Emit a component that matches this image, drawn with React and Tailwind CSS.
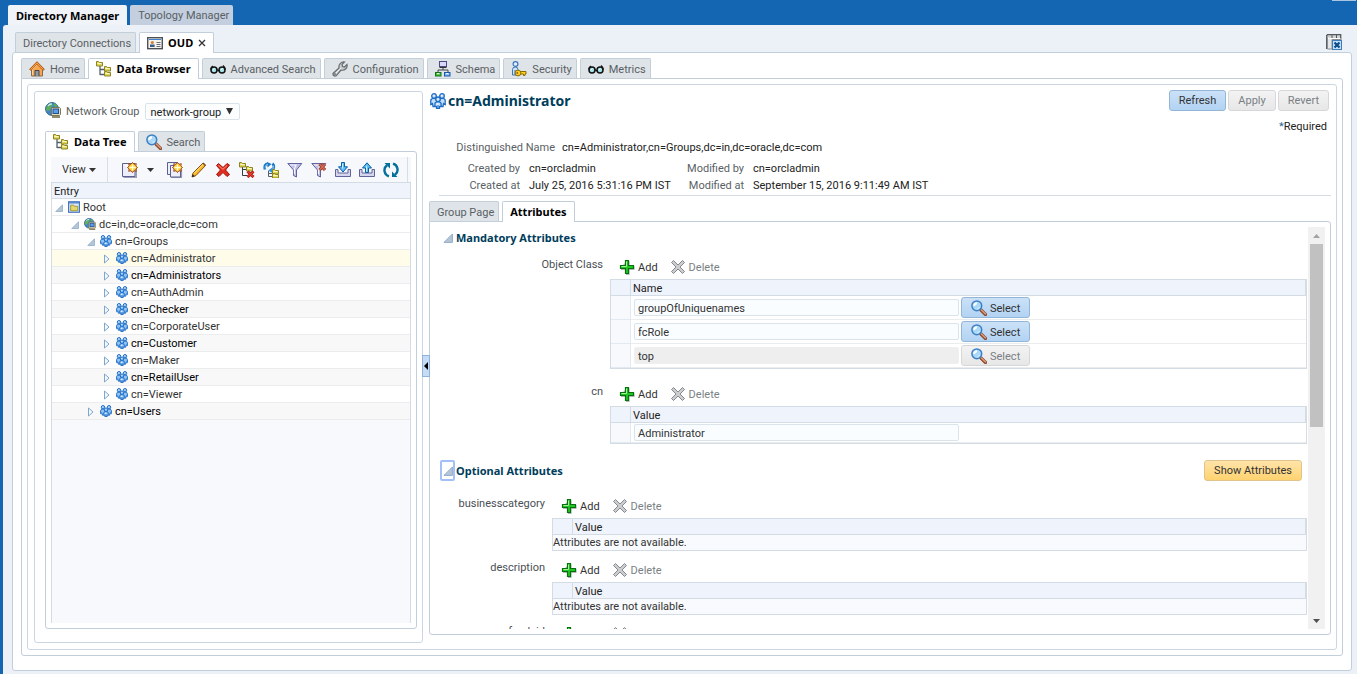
import React, { useState } from 'react';

/* ---------- Icons ---------- */

function Icon({ size = 16, children }) {
  return (
    <svg
      width={size}
      height={size}
      viewBox="0 0 16 16"
      fill="none"
      aria-hidden="true"
      className="shrink-0"
    >
      {children}
    </svg>
  );
}

function HomeIcon() {
  return (
    <Icon>
      <path d="M2.500 8v7h11V8L8 2.500z" fill="#f7a54e" stroke="#8a6a48" />
      <path d="M3.500 14V8.500L8 4" stroke="#ffd29a" />
      <path d="M6 15V9.500h4V15" fill="#8d99a8" stroke="#3f4854" />
      <path d="M1 9l7-7 7 7" stroke="#a04d12" strokeWidth="2.400" />
      <path d="M1.500 8.700L8 2.200l6.500 6.500" stroke="#ffa544" strokeWidth="1.200" />
    </Icon>
  );
}

function Folder({ x, y }) {
  return (
    <g transform={`translate(${x} ${y})`}>
      <path d="M.5.5h2l1 1h3v3.500h-6z" fill="#e2d75c" stroke="#8b8422" />
      <path d="M1.500 2.500h4" stroke="#fbf8c4" />
    </g>
  );
}

function TreeIcon() {
  return (
    <Icon>
      <path d="M4 5v9M4 8.500h5M4 13.500h5" stroke="#55606b" strokeWidth="1.300" />
      <Folder x={0} y={0} />
      <Folder x={8} y={5} />
      <Folder x={8} y={10} />
    </Icon>
  );
}

function TreeDeleteIcon() {
  return (
    <Icon>
      <path d="M3.500 5v8.500H8M3.500 7.500H8" stroke="#333b44" />
      <Folder x={0} y={0} />
      <Folder x={7} y={4} />
      <path d="M8.500 9.500l6 5.500M14.500 9.500l-6 5.500" stroke="#8f1410" strokeWidth="2.800" />
      <path d="M8.500 9.500l6 5.500M14.500 9.500l-6 5.500" stroke="#ee3a2b" strokeWidth="1.400" />
    </Icon>
  );
}

function TreeRefreshIcon() {
  return (
    <Icon>
      <path d="M5.500 9v5.500H9M5.500 11.500H9" stroke="#55606b" />
      <path d="M2 7.500C1 4 2.500 1.500 5 1.700" stroke="#1c78c4" strokeWidth="2.600" />
      <path d="M4 0l4.500 2L4.500 5.500z" fill="#1c78c4" />
      <path d="M9.500 1.500C12 4 11 7.500 8.500 8.500" stroke="#1c78c4" strokeWidth="2.600" />
      <path d="M9.500 5.500v5.500L5 8.500z" fill="#2f95dc" />
      <path d="M2.300 6.500C2 4 3 2.300 5 2.200M10.300 3.500q1 2-.8 4" stroke="#9ad8fa" strokeWidth=".8" />
      <Folder x={9} y={7} />
      <Folder x={9} y={11} />
    </Icon>
  );
}

function GlassesIcon() {
  return (
    <Icon>
      <circle cx="4" cy="9" r="3" fill="#a5e3e6" stroke="#111" strokeWidth="1.500" />
      <circle cx="12" cy="9" r="3" fill="#a5e3e6" stroke="#111" strokeWidth="1.500" />
      <path d="M6.500 8.500l3 1.500M1 8.500Q.5 6.500 3 5M15 8.500q.5-2-2-4" stroke="#111" strokeWidth="1.300" />
      <path d="M3 9l1.500-1.500M11 9l1.500-1.500" stroke="#fff" />
    </Icon>
  );
}

function WrenchIcon() {
  return (
    <Icon>
      <path
        d="M1.200 12.200L7 7C6.200 3.500 9 .6 12.500 1L10 3.500l.5 2 2 .5L15 3.500c.8 3.700-2.500 6.500-6 5.500L4.200 14.800c-1.700 1-3.900-.8-3-2.600z"
        fill="#c9cbcd"
        stroke="#6a6d70"
        strokeWidth="1.200"
      />
      <path d="M3 13l6-6" stroke="#f2f3f4" />
      <circle cx="3" cy="13" r=".9" fill="#6a6d70" />
    </Icon>
  );
}

function SchemaIcon() {
  return (
    <Icon>
      <path d="M8 6v3M3 11.500V9h10v2.500" stroke="#444" />
      <rect x="4.500" y=".5" width="7" height="5" fill="#d9d6f7" stroke="#4b4a83" />
      <path d="M4.500 6.500h7" stroke="#333" />
      <rect x=".5" y="11.500" width="5.500" height="3.500" fill="#3fbf3c" stroke="#14701a" />
      <rect x="9.500" y="11.500" width="5.500" height="3.500" fill="#7db9f2" stroke="#1d56a5" />
      <path d="M2 12.700h2.500M11 12.700h2.500" stroke="#fff" />
    </Icon>
  );
}

function SecurityIcon() {
  return (
    <Icon>
      <path d="M1.500 14V8.500Q1.500 6 4.200 6T7 8.500L6.500 14z" fill="#cfe2f8" stroke="#3c74bd" />
      <path d="M4 9v5" stroke="#3c74bd" />
      <circle cx="4.500" cy="3" r="2.400" fill="#e3effc" stroke="#3c74bd" strokeWidth="1.200" />
      <path d="M9 10.500h6v2.500h-1v1.500h-1.500V13H9" fill="#ffd21f" stroke="#8c6a08" />
      <circle cx="7" cy="12" r="2.900" fill="#ffd21f" stroke="#8c6a08" />
      <circle cx="6.300" cy="12" r="1" fill="#8c6a08" />
    </Icon>
  );
}

function CardIcon() {
  return (
    <Icon>
      <rect x=".7" y="2.700" width="14.600" height="11" fill="#f4f4ec" stroke="#4c5158" strokeWidth="1.400" />
      <path d="M2 4.500h12" stroke="#3f7fd0" />
      <circle cx="5.300" cy="7.500" r="1.600" fill="#d4823a" />
      <path d="M3 12V9.500h4.600V12z" fill="#3a5a8c" />
      <path d="M9.500 7.500h4M9.500 9.500h4M9.500 11.500h4" stroke="#6a7078" />
    </Icon>
  );
}

function CloseTabsIcon() {
  return (
    <Icon>
      <path d="M.7 15V1.500l1-1h13V6" fill="#d0d2d4" stroke="#55585c" strokeWidth="1.300" />
      <path d="M1.500 3.500V15H6V5.500h9" fill="#e3e5e6" stroke="#8b8f94" />
      <path d="M6 1v3M10.500 1v3" stroke="#55585c" />
      <path d="M2 4.500h12.500" stroke="#fff" />
      <rect x="6.500" y="6.500" width="9" height="9" fill="#c5e0f6" stroke="#3c7cb8" />
      <path d="M8.500 8.500l5 5M13.500 8.500l-5 5" stroke="#0b4a86" strokeWidth="2.200" />
    </Icon>
  );
}

function GlobeIcon({ size }) {
  return (
    <Icon size={size}>
      <circle cx="7" cy="7" r="6.400" fill="#3f86c7" stroke="#2a5f92" />
      <path d="M1.500 5q2-4 5-4l1.500 2L6 5 5 8 2.500 9 1 8zM9 1l3.500 2.500L11 5 9 4z" fill="#5fae5b" />
      <path d="M3 4Q4.500 1.800 7 1.800" stroke="#d2ecff" strokeWidth="1.300" />
      <path d="M6.500 5.500h8l1 1v6l-1 1h-8z" fill="#e4ddb8" stroke="#7d7754" />
      <rect x="8" y="7" width="5.500" height="4.500" fill="#5c9dec" stroke="#1f4f94" />
      <path d="M7 15h8" stroke="#7d7754" strokeWidth="1.700" />
    </Icon>
  );
}

function SearchIcon() {
  return (
    <Icon>
      <path d="M10 10l4.500 4.500" stroke="#8a4a30" strokeWidth="3.200" strokeLinecap="round" />
      <path d="M10.500 10l4 4" stroke="#dd9c7c" strokeWidth="1.500" strokeLinecap="round" />
      <circle cx="5.800" cy="5.800" r="4.900" fill="#a9d8f8" stroke="#3f80c4" strokeWidth="1.500" />
      <path d="M3.200 6Q3.200 3.200 6 3.200" stroke="#fff" strokeWidth="2" />
      <path d="M8.500 7Q8 8.500 6.500 8.800" stroke="#e2f4ff" />
    </Icon>
  );
}

function Spark() {
  return (
    <g>
      <path
        d="M10.500.5l1.500 1.800 2.300-.6-.5 2.300 1.700 1.500-1.700 1.500.5 2.300-2.300-.6-1.500 1.800L9 8.700l-2.300.6.5-2.300L5.500 5.500 7.200 4l-.5-2.300 2.300.6z"
        fill="#ffcf2e"
        stroke="#96381a"
        strokeWidth=".9"
      />
      <path d="M10.500 2.500v6M7.500 5.500h6" stroke="#fffce0" strokeWidth="1.300" />
    </g>
  );
}

function NewIcon() {
  return (
    <Icon>
      <path d="M1.500 15.300h12.800V6" stroke="#9a9cba" strokeWidth="1.400" />
      <path d="M.5 1.500h12.500v13H.5z" fill="#eceffa" stroke="#5c5f8f" />
      <path d="M1.500 2.500h6v5z" fill="#fff" />
      <Spark />
    </Icon>
  );
}

function NewCopyIcon() {
  return (
    <Icon>
      <path d="M.5.5h10v12H.5z" fill="#eceffa" stroke="#5c5f8f" />
      <path d="M4 15.500h10.500V7" stroke="#9a9cba" strokeWidth="1.200" />
      <path d="M3.500 3.500h10v11.500h-10z" fill="#eceffa" stroke="#5c5f8f" />
      <Spark />
    </Icon>
  );
}

function PencilIcon() {
  return (
    <Icon>
      <path d="M1 15l1-4L12 1l2.500 2.500L5 13.500z" fill="#f7b52a" stroke="#8a5310" />
      <path d="M3 11.500L12.500 2" stroke="#ffe494" />
      <path d="M1 15l.6-2.800 2.200 2.100z" fill="#222" />
      <path d="M12 1l2.500 2.500" stroke="#7a4a1c" strokeWidth="1.500" />
    </Icon>
  );
}

function RedXIcon() {
  return (
    <Icon>
      <path
        d="M1.500 3.500l2-2L8 5.500l4-4 2.500 1.500L10.500 8l4 4.500-2.500 2L8 10.500l-4 4-2.500-2L5.500 8z"
        fill="#e22c1c"
        stroke="#9c150b"
      />
      <path d="M3.500 3.500L8 7.300l4-3.800" stroke="#ff9382" />
    </Icon>
  );
}

function FunnelShape() {
  return (
    <g>
      <path d="M.8 1.500h14L9.500 8v7l-3-1.500V8z" fill="#bfc0e4" stroke="#62639c" />
      <path d="M3 3h6L7.500 6.500V12" stroke="#f6f6ff" strokeWidth="1.200" />
    </g>
  );
}

function FunnelIcon() {
  return (
    <Icon>
      <FunnelShape />
    </Icon>
  );
}

function FunnelClearIcon() {
  return (
    <Icon>
      <FunnelShape />
      <path d="M8.500 2l5.500 6M14 2L8.500 8" stroke="#8f3a2c" strokeWidth="3.200" />
      <path d="M8.500 2l5.500 6M14 2L8.500 8" stroke="#d96a55" strokeWidth="1.500" />
    </Icon>
  );
}

function TrayShape() {
  return <path d="M3 7.500H.5v7h15v-7H13V11H3z" fill="#d5d6ee" stroke="#61639b" />;
}

function ImportIcon() {
  return (
    <Icon>
      <TrayShape />
      <path d="M6.500.5h3v4.300h3L8 10 3.500 4.800h3z" fill="#5fc0f8" stroke="#0b5da3" />
      <path d="M7.500 1.500v5" stroke="#c9edff" />
    </Icon>
  );
}

function ExportIcon() {
  return (
    <Icon>
      <TrayShape />
      <path d="M6.500 10.500h3V6h3L8 .8 3.500 6h3z" fill="#5fc0f8" stroke="#0b5da3" />
      <path d="M7.500 4v5.500" stroke="#c9edff" />
    </Icon>
  );
}

function RefreshIcon() {
  return (
    <Icon>
      <path d="M6 14.300A6.300 6.300 0 0 1 4 3.200" stroke="#06709c" strokeWidth="2.400" />
      <path d="M10 1.700A6.300 6.300 0 0 1 12 12.800" stroke="#06709c" strokeWidth="2.400" />
      <path d="M1.500 1h5.500v5.500zM14.500 15H9V9.500z" fill="#06709c" />
    </Icon>
  );
}

function RootIcon() {
  return (
    <Icon size={12}>
      <rect x=".8" y="1" width="14.400" height="14" fill="#dbe9fb" stroke="#3b6fc0" strokeWidth="1.500" />
      <path d="M1.500 2.500h13" stroke="#3b6fc0" strokeWidth="1.500" />
      <path d="M3.500 5.500h4l1 1.500h4.500v6H3.500z" fill="#e5d76a" stroke="#8b8422" />
    </Icon>
  );
}

function GroupIcon({ size, fill = '#c3dffa' }) {
  return (
    <Icon size={size}>
      <g fill={fill} stroke="#1e6cc4" strokeWidth="1.300">
        <circle cx="4" cy="3" r="2.300" />
        <circle cx="12" cy="3" r="2.300" />
        <path d="M.8 11.500V7.500Q.8 5.400 4 5.400T7 7.500l-1 6H3l-.5-3z" />
        <path d="M15.200 11.500V7.500q0-2.100-3.200-2.100T9 7.500l1 6h3l.5-3z" />
        <circle cx="8" cy="6.300" r="2.300" />
        <path d="M4.900 13v-2.200q0-2 3.100-2t3.100 2V13l-1.600.5v2h-3v-2z" />
      </g>
      <path d="M3.300 2.500h1M11.300 2.500h1M7.400 5.800h1M6.500 11h2" stroke="#fff" strokeWidth="1.200" />
      <path d="M8 12v3.500" stroke="#1e6cc4" />
    </Icon>
  );
}

function PlusIcon() {
  return (
    <Icon>
      <path d="M7.500 2.500h3v5h5v3.500h-5v5H7v-5H2V8" fill="#aeb8b0" />
      <path d="M6.500 1.500h3v5h5v3h-5v5h-3v-5h-5v-3h5z" fill="#1fc81f" stroke="#0a6f12" strokeWidth="1.200" />
      <path d="M7.500 2.500v5h-5" stroke="#a4f59c" />
    </Icon>
  );
}

function GrayXIcon() {
  return (
    <Icon>
      <path
        d="M1.500 3.500l2-2L8 6l4.500-4.500 2 2L10 8l4.500 4.500-2 2L8 10l-4.500 4.500-2-2L6 8z"
        fill="#cbcdcf"
        stroke="#85888c"
      />
    </Icon>
  );
}

function Disclosure({ open, size = 8 }) {
  return open ? (
    <svg width={size} height={size} viewBox="0 0 8 8" aria-hidden="true" className="shrink-0">
      <path d="M7.500.8v6.700H.8z" fill="#b4c6d8" stroke="#8fabc6" strokeWidth=".8" />
    </svg>
  ) : (
    <svg width="8" height="10" viewBox="0 0 8 10" fill="none" aria-hidden="true" className="shrink-0">
      <path d="M1.500 1v8l4.500-4z" fill="#f4f9fe" stroke="#7fa6cd" />
    </svg>
  );
}

function Caret() {
  return (
    <svg width="7" height="4" viewBox="0 0 7 4" aria-hidden="true" className="shrink-0">
      <path d="M0 0h7L3.500 4z" fill="#333" />
    </svg>
  );
}

/* ---------- Shared pieces ---------- */

const bold = "font-['Noto_Sans',sans-serif] font-bold";

function Tab({ icon, label, active, onClick, children }) {
  return (
    <button
      type="button"
      role="tab"
      aria-selected={active}
      onClick={onClick}
      className={
        'flex items-center gap-[5px] rounded-t-[2px] border border-b-0 border-[#c3cedb] pl-[7px] whitespace-nowrap ' +
        (active ? `relative h-[21px] -mb-px pr-[7px] bg-white text-black ${bold}` : 'h-5 pr-1 bg-[#dfe4e8] text-[#5a5f65]')
      }
    >
      {icon}
      <span className={active ? '' : 'pt-[2px]'}>{label}</span>
      {children}
    </button>
  );
}

function ActionButton({ tone = 'blue', disabled, icon, children }) {
  const tones = {
    blue: 'border-[#92b5d8] bg-linear-to-b from-[#cbe1f7] to-[#b2d3f3] text-[#333]',
    gray: 'border-[#d5d7d9] bg-linear-to-b from-[#f3f3f3] to-[#e7e7e7] text-[#7a7f85]',
    gold: 'border-[#dfc48b] bg-linear-to-b from-[#ffe4a9] to-[#ffd26e] text-[#333]',
  };
  return (
    <button
      type="button"
      disabled={disabled}
      className={`flex items-center gap-[3px] h-[21px] px-[9px] rounded-[3px] border whitespace-nowrap ${tones[tone]}`}
    >
      {icon}
      <span className={icon ? 'pt-[2px]' : ''}>{children}</span>
    </button>
  );
}

/* ---------- Left side: data tree ---------- */

const treeRows = [
  { level: 0, label: 'Root', kind: 'root', open: true },
  { level: 1, label: 'dc=in,dc=oracle,dc=com', kind: 'domain', open: true },
  { level: 2, label: 'cn=Groups', kind: 'group', open: true },
  { level: 3, label: 'cn=Administrator', kind: 'group', selected: true },
  { level: 3, label: 'cn=Administrators', kind: 'group', band: true },
  { level: 3, label: 'cn=AuthAdmin', kind: 'group' },
  { level: 3, label: 'cn=Checker', kind: 'group', band: true },
  { level: 3, label: 'cn=CorporateUser', kind: 'group' },
  { level: 3, label: 'cn=Customer', kind: 'group', band: true },
  { level: 3, label: 'cn=Maker', kind: 'group' },
  { level: 3, label: 'cn=RetailUser', kind: 'group', band: true },
  { level: 3, label: 'cn=Viewer', kind: 'group' },
  { level: 2, label: 'cn=Users', kind: 'group', band: true },
];

const indents = ['pl-[3px]', 'pl-[19px]', 'pl-[35px]', 'pl-[51px]'];

const rowIcons = {
  root: <RootIcon />,
  domain: <GlobeIcon size={12} />,
  group: <GroupIcon size={12} fill="#8fc3f5" />,
};

function TreeRow({ row }) {
  const tone = row.selected
    ? 'bg-[#fffdea] text-[#333]'
    : row.band
      ? 'bg-[#f8f8f8] text-black'
      : 'bg-white text-[#333]';
  return (
    <li
      role="treeitem"
      aria-expanded={!!row.open}
      aria-selected={!!row.selected}
      className={`flex items-center h-[17px] border-b border-[#ebecee] ${indents[row.level]} ${tone}`}
    >
      <span className="w-[13px] flex items-center pt-[2px]">
        <Disclosure open={row.open} />
      </span>
      {rowIcons[row.kind]}
      <span className="ml-[3px] pt-[2px]">{row.label}</span>
    </li>
  );
}

const toolbarActions = [
  ['Create like', <NewCopyIcon />],
  ['Edit', <PencilIcon />],
  ['Delete', <RedXIcon />],
  ['Delete subtree', <TreeDeleteIcon />],
  ['Refresh subtree', <TreeRefreshIcon />],
  ['Filter', <FunnelIcon />],
  ['Clear filter', <FunnelClearIcon />],
  ['Import', <ImportIcon />],
  ['Export', <ExportIcon />],
  ['Refresh', <RefreshIcon />],
];

function TreeToolbar() {
  return (
    <div className="flex items-center h-[25px] bg-[#f6f8fc]">
      <button type="button" className="flex items-center gap-[3px] w-14 h-full pl-[11px] text-[#333]">
        View <Caret />
      </button>
      <span className="w-px h-full bg-[#d6dfe6]" />
      <button type="button" aria-label="New entry" className="ml-[14px]">
        <NewIcon />
      </button>
      <button type="button" aria-label="New entry options" className="mx-[9px]">
        <Caret />
      </button>
      {toolbarActions.map(([label, icon]) => (
        <button key={label} type="button" aria-label={label} className="w-6 flex justify-center">
          {icon}
        </button>
      ))}
      <span className="ml-1 w-px h-full bg-[#d6dfe6]" />
    </div>
  );
}

function BrowserPane() {
  const [group, setGroup] = useState('network-group');

  return (
    <aside className="w-[389px] shrink-0 flex flex-col rounded-[3px] border border-[#ccd6e2] pl-[10px] pr-[5px] pt-[10px] pb-[13px]">
      <div className="flex items-start h-[18px]">
        <GlobeIcon size={16} />
        <label htmlFor="network-group" className="ml-[5px] pt-[2px] text-[#5a5f65]">
          Network Group
        </label>
        <div className="relative ml-[6px] pt-px">
          <select
            id="network-group"
            value={group}
            onChange={(e) => setGroup(e.target.value)}
            className="block appearance-none w-[95px] h-[17px] pl-1 pt-px rounded-[2px] border border-[#dbe3ea] bg-[#fbfdff] text-[#222]"
          >
            <option>network-group</option>
          </select>
          <svg
            width="7"
            height="7"
            viewBox="0 0 7 7"
            aria-hidden="true"
            className="absolute right-[7px] top-[6px] pointer-events-none"
          >
            <path d="M0 0h7L3.500 6.500z" fill="#333" />
          </svg>
        </div>
      </div>

      <div role="tablist" className="flex gap-[3px] mt-[11px]">
        <Tab active icon={<TreeIcon />} label="Data Tree" />
        <Tab icon={<SearchIcon />} label="Search" />
      </div>
      <div className="flex-1 min-h-0 flex flex-col rounded-b-[3px] rounded-tr-[3px] border border-[#c3cedb] p-[5px]">
        <TreeToolbar />
        <div className="flex-1 min-h-0 flex flex-col border-x border-[#d3dce5] bg-[#f7f9fd]">
          <div className="h-[17px] border-y border-[#d3dce5] bg-[#eff3fb] pl-[2px] pt-px leading-[15px] text-[#222]">
            Entry
          </div>
          <ul role="tree">
            {treeRows.map((row) => (
              <TreeRow key={row.label} row={row} />
            ))}
          </ul>
        </div>
      </div>
    </aside>
  );
}

/* ---------- Right side: entry details ---------- */

function AttributeBlock({ label, wide, children }) {
  return (
    <div className="flex gap-[7px] pr-px">
      <div className={`shrink-0 pt-px text-right text-[#4a4f55] ${wide ? 'w-[168px]' : 'w-[110px]'}`}>{label}</div>
      <div className="flex-1 min-w-0 pt-[3px]">
        <div className="flex items-center gap-3 h-4 mb-1 pl-[9px]">
          <button type="button" className="flex items-center gap-[3px] text-[#333]">
            <PlusIcon />
            <span className="pt-[2px]">Add</span>
          </button>
          <button type="button" disabled className="flex items-center gap-[3px] text-[#7a7f85]">
            <GrayXIcon />
            <span className="pt-[2px]">Delete</span>
          </button>
        </div>
        {children}
      </div>
    </div>
  );
}

function ValueTable({ heading, children }) {
  return (
    <table className="w-full border-separate border-spacing-0 border border-[#d3dce5]">
      <thead>
        <tr className="bg-[#eff3fb] text-left leading-[13px] text-[#222]">
          <th className="w-5 h-4 p-0 border-b border-r border-[#d3dce5]" />
          <th className="h-4 p-0 pl-[2px] pt-[2px] border-b border-r border-[#d3dce5] font-normal">{heading}</th>
        </tr>
      </thead>
      <tbody>{children}</tbody>
    </table>
  );
}

function ValueRow({ name, value, readOnly, selectable }) {
  const [text, setText] = useState(value);

  return (
    <tr>
      <td className="p-0 bg-[#f7f9fd] border-b border-r border-[#e3e9f0]" />
      <td className={`p-0 pl-[3px] border-b border-[#ebecee] ${selectable ? 'h-6' : 'h-5'}`}>
        <div className="flex items-center gap-[2px]">
          <input
            type="text"
            aria-label={name}
            value={text}
            disabled={readOnly}
            onChange={(e) => setText(e.target.value)}
            className={
              'w-[325px] h-[17px] px-[3px] pt-px rounded-[2px] border text-[#333] ' +
              (readOnly ? 'bg-[#eeeeef] border-[#f0f0f0]' : 'bg-[#f9fdff] border-[#dbe4ea]')
            }
          />
          {selectable && (
            <ActionButton tone={readOnly ? 'gray' : 'blue'} disabled={readOnly} icon={<SearchIcon />}>
              Select
            </ActionButton>
          )}
        </div>
      </td>
    </tr>
  );
}

function EmptyRow() {
  return (
    <tr>
      <td colSpan={2} className="h-[15px] p-0 bg-[#f8fafd] leading-[14px] text-[#333]">
        Attributes are not available.
      </td>
    </tr>
  );
}

function ScrollTrack() {
  return (
    <div className="w-[17px] shrink-0 flex flex-col items-center bg-[#f1f1f1]">
      <span className="h-[17px] flex items-center">
        <svg width="7" height="4" viewBox="0 0 7 4" aria-hidden="true">
          <path d="M0 4h7L3.500 0z" fill="#a3a3a3" />
        </svg>
      </span>
      <span className="w-[13px] h-[183px] bg-[#c1c1c1]" />
      <span className="mt-auto h-[17px] flex items-center">
        <svg width="7" height="4" viewBox="0 0 7 4" aria-hidden="true">
          <path d="M0 0h7L3.500 4z" fill="#505050" />
        </svg>
      </span>
    </div>
  );
}

function EntryHeader() {
  return (
    <header>
      <div className="flex items-center justify-between">
        <h1 className={`flex items-center gap-[2px] pl-px text-sm text-[#003d5b] ${bold}`}>
          <GroupIcon size={16} />
          cn=Administrator
        </h1>
        <div className="flex gap-[2px] pr-[2px]">
          <ActionButton>Refresh</ActionButton>
          <ActionButton tone="gray" disabled>Apply</ActionButton>
          <ActionButton tone="gray" disabled>Revert</ActionButton>
        </div>
      </div>
      <p className="mt-2 pr-1 text-right text-[#222]">
        <span className="text-[#2f6690]">*</span>Required
      </p>
      <div className="mt-[5px] flex gap-[7px] text-[#222]">
        <span className="w-[126px] text-right text-[#5a5f65]">Distinguished Name</span>
        <span>cn=Administrator,cn=Groups,dc=in,dc=oracle,dc=com</span>
      </div>
      <div className="mt-[5px] grid grid-cols-[91px_142px_64px_1fr] gap-x-[9px] gap-y-px text-[#222]">
        <span className="text-right text-[#5a5f65]">Created by</span>
        <span>cn=orcladmin</span>
        <span className="text-right text-[#5a5f65]">Modified by</span>
        <span>cn=orcladmin</span>
        <span className="text-right text-[#5a5f65]">Created at</span>
        <span>July 25, 2016 5:31:16 PM IST</span>
        <span className="text-right text-[#5a5f65]">Modified at</span>
        <span>September 15, 2016 9:11:49 AM IST</span>
      </div>
      <hr className="mt-px ml-[10px] border-[#d3dce5]" />
    </header>
  );
}

function EntryPane() {
  return (
    <section className="relative flex-1 min-w-0 flex flex-col ml-[6px] pr-[5px] pt-[5px] pb-[14px]">
      <button
        type="button"
        aria-label="Collapse pane"
        className="absolute -left-[7px] top-[270px] w-2 h-[22px] flex items-center justify-center border border-[#8fb3dc] bg-[#c6dcf4]"
      >
        <svg width="4" height="8" viewBox="0 0 4 8" aria-hidden="true">
          <path d="M4 0v8L0 4z" fill="#000" />
        </svg>
      </button>

      <EntryHeader />

      <div role="tablist" className="flex gap-[3px] mt-[5px]">
        <Tab label="Group Page" />
        <Tab active label="Attributes" />
      </div>
      <div className="flex-1 min-h-0 flex rounded-b-[3px] rounded-tr-[3px] border border-[#c3cedb] p-[5px]">
        <div className="flex-1 min-w-0 overflow-hidden">
          <h2 className={`flex items-center gap-[3px] pt-[3px] pl-2 text-[#003d5b] ${bold}`}>
            <Disclosure open size={10} />
            Mandatory Attributes
          </h2>
          <div className="flex flex-col gap-[14px] mt-[10px]">
            <AttributeBlock wide label="Object Class">
              <ValueTable heading="Name">
                <ValueRow name="Object class 1" value="groupOfUniquenames" selectable />
                <ValueRow name="Object class 2" value="fcRole" selectable />
                <ValueRow name="Object class 3" value="top" selectable readOnly />
              </ValueTable>
            </AttributeBlock>
            <AttributeBlock wide label="cn">
              <ValueTable heading="Value">
                <ValueRow name="cn" value="Administrator" />
              </ValueTable>
            </AttributeBlock>
          </div>

          <div className="flex items-center justify-between mt-4 pl-[5px] pr-[6px]">
            <h2 className={`flex items-center gap-px text-[#003d5b] ${bold}`}>
              <button
                type="button"
                aria-label="Collapse Optional Attributes"
                className="w-[15px] h-[21px] flex items-center justify-end border-2 border-[#a3c1f8] rounded-[2px]"
              >
                <Disclosure open size={10} />
              </button>
              Optional Attributes
            </h2>
            <ActionButton tone="gold">Show Attributes</ActionButton>
          </div>
          <div className="flex flex-col gap-2 mt-[14px]">
            <AttributeBlock label="businesscategory">
              <ValueTable heading="Value">
                <EmptyRow />
              </ValueTable>
            </AttributeBlock>
            <AttributeBlock label="description">
              <ValueTable heading="Value">
                <EmptyRow />
              </ValueTable>
            </AttributeBlock>
            <AttributeBlock label="fcroleid">
              <ValueTable heading="Value">
                <EmptyRow />
              </ValueTable>
            </AttributeBlock>
          </div>
        </div>
        <ScrollTrack />
      </div>
    </section>
  );
}

/* ---------- Page ---------- */

const sections = [
  ['Home', <HomeIcon />],
  ['Data Browser', <TreeIcon />],
  ['Advanced Search', <GlassesIcon />],
  ['Configuration', <WrenchIcon />],
  ['Schema', <SchemaIcon />],
  ['Security', <SecurityIcon />],
  ['Metrics', <GlassesIcon />],
];

export default function App() {
  const [section, setSection] = useState('Data Browser');

  return (
    <div className="h-screen flex flex-col overflow-hidden bg-[#1466b3] pl-[3px] font-[Roboto,sans-serif] text-[11px] leading-4">
      <div className="flex justify-between items-start">
        <div role="tablist" className="flex gap-[3px] pl-[5px] pt-[5px]">
          <button
            type="button"
            role="tab"
            aria-selected="true"
            className={`h-5 px-2 pt-[2px] rounded-t-[2px] bg-[#f0f4f8] text-black ${bold}`}
          >
            Directory Manager
          </button>
          <button
            type="button"
            role="tab"
            aria-selected="false"
            className="h-5 pl-2 pr-1 pt-[2px] rounded-t-[2px] bg-[#c3cfdf] text-[#5a5f65]"
          >
            Topology Manager
          </button>
        </div>
        <span className="w-6 h-px mr-px bg-[#a9c3e0]" />
      </div>

      <div className="flex-1 min-h-0 flex flex-col rounded-tl-[3px] bg-[#ebf1f6] pl-[9px] pr-[5px] pt-[7px] pb-[3px]">
        <div className="flex justify-between">
          <div role="tablist" className="flex gap-[3px] pl-[3px]">
            <Tab label="Directory Connections" />
            <Tab active icon={<CardIcon />} label="OUD">
              <svg width="8" height="8" viewBox="0 0 8 8" aria-hidden="true">
                <path d="M1 1l6 6M7 1L1 7" stroke="#333" strokeWidth="1.300" />
              </svg>
            </Tab>
          </div>
          <button type="button" aria-label="Close all tabs" className="mr-[10px]">
            <CloseTabsIcon />
          </button>
        </div>

        <div className="flex-1 min-h-0 flex flex-col rounded-[3px] border border-[#c3cedb] bg-white px-2 pt-[5px] pb-[14px]">
          <div role="tablist" className="flex gap-[3px]">
            {sections.map(([label, icon]) => (
              <Tab
                key={label}
                icon={icon}
                label={label}
                active={label === section}
                onClick={() => setSection(label)}
              />
            ))}
          </div>
          <div className="flex-1 min-h-0 flex flex-col rounded-b-[3px] rounded-tr-[3px] border border-[#c3cedb] p-[5px]">
            <main className="flex-1 min-h-0 flex rounded-[3px] border border-[#ccd6e2]">
              <div className="flex pl-[6px] pt-[6px] pb-[6px]">
                <BrowserPane />
              </div>
              <EntryPane />
            </main>
          </div>
        </div>
      </div>
    </div>
  );
}
